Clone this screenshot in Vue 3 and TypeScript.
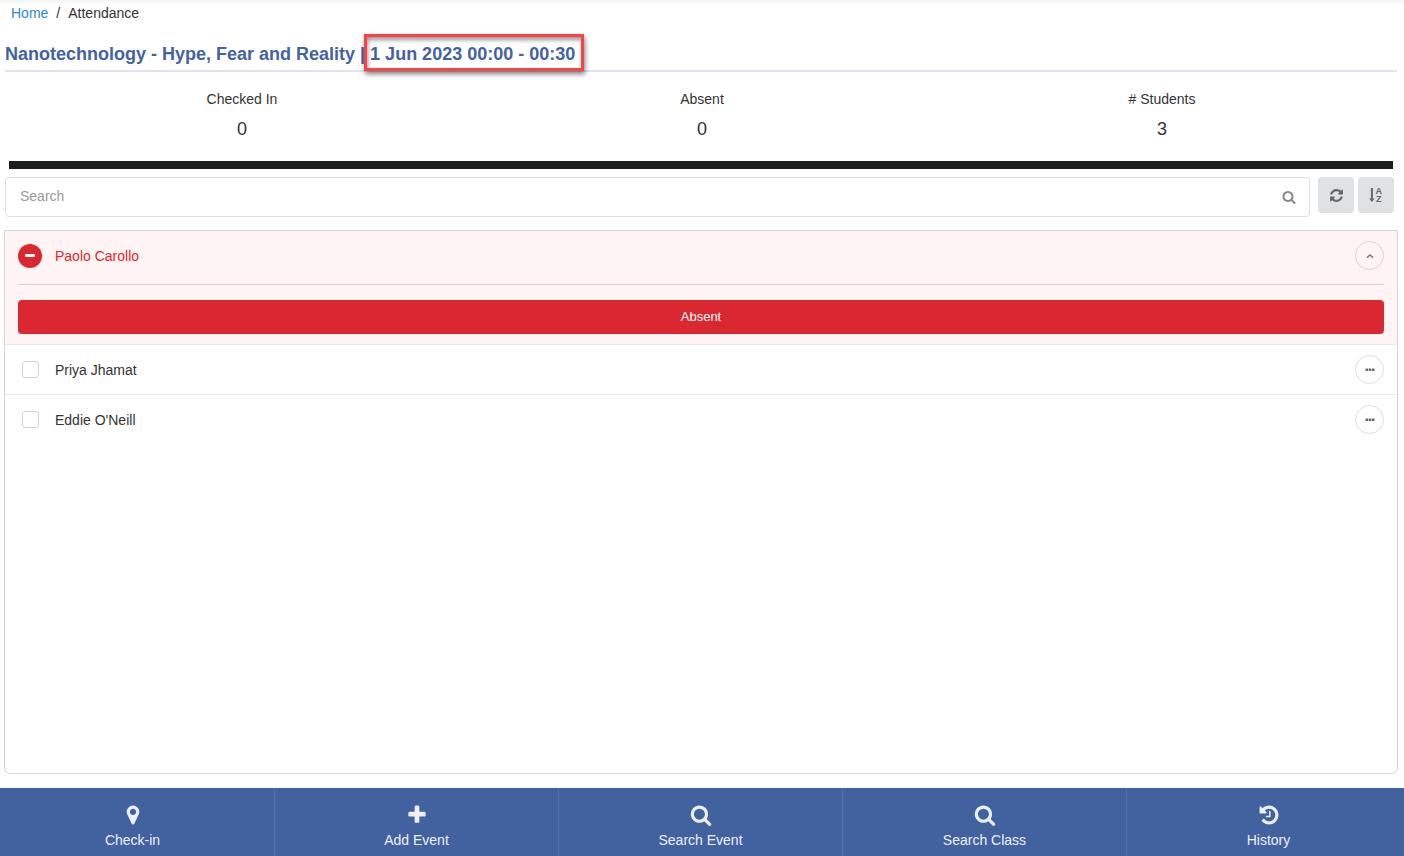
<script setup lang="ts">
import { ref } from 'vue'

interface Stat {
  label: string
  value: number
}

interface Student {
  id: string
  name: string
  present: boolean
}

interface NavItem {
  label: string
  icon: string
}

const searchIcon =
  'M1216 832q0-185-131.5-316.5t-316.5-131.5-316.5 131.5-131.5 316.5 131.5 316.5 316.5 131.5 316.5-131.5 131.5-316.5zm512 832q0 52-38 90t-90 38q-54 0-90-38l-343-342q-179 124-399 124-143 0-273.5-55.5t-225-150-150-225-55.5-273.5 55.5-273.5 150-225 225-150 273.5-55.5 273.5 55.5 225 150 150 225 55.5 273.5q0 220-124 399l343 343q37 37 37 90z'
const plusIcon =
  'M1600 736v192q0 40-28 68t-68 28h-416v416q0 40-28 68t-68 28h-192q-40 0-68-28t-28-68v-416h-416q-40 0-68-28t-28-68v-192q0-40 28-68t68-28h416v-416q0-40 28-68t68-28h192q40 0 68 28t28 68v416h416q40 0 68 28t28 68z'
const markerIcon =
  'M1152 640q0-106-75-181t-181-75-181 75-75 181 75 181 181 75 181-75 75-181zm256 0q0 109-33 179l-364 774q-16 33-47.5 52t-67.5 19-67.5-19-46.5-52l-365-774q-33-70-33-179 0-212 150-362t362-150 362 150 150 362z'
const historyIcon =
  'M1664 896q0 156-61 298t-164 245-245 164-298 61q-172 0-327-72.5t-264-204.5q-7-10-6.5-22.5t8.5-20.5l137-138q10-9 25-9 16 2 23 12 73 95 179 147t225 52q104 0 198.5-40.5t163.5-109.5 109.5-163.5 40.5-198.5-40.5-198.5-109.5-163.5-163.5-109.5-198.5-40.5q-98 0-188 35.5t-160 101.5l137 138q31 30 14 69-17 40-59 40h-448q-26 0-45-19t-19-45v-448q0-42 40-59 39-17 69 14l130 129q107-101 244.5-156.5t284.5-55.5q156 0 298 61t245 164 164 245 61 298zm-640-288v448q0 14-9 23t-23 9h-320q-14 0-23-9t-9-23v-64q0-14 9-23t23-9h224v-352q0-14 9-23t23-9h64q14 0 23 9t9 23z'
const refreshIcon =
  'M1639 1056q0 5-1 7-64 268-268 434.5t-478 166.5q-146 0-282.5-55t-243.5-157l-129 129q-19 19-45 19t-45-19-19-45v-448q0-26 19-45t45-19h448q26 0 45 19t19 45-19 45l-137 137q71 66 161 102t187 36q134 0 250-65t186-179q11-17 53-117 8-23 30-23h192q13 0 22.5 9.5t9.5 22.5zm25-800v448q0 26-19 45t-45 19h-448q-26 0-45-19t-19-45 19-45l138-138q-148-137-349-137-134 0-250 65t-186 179q-11 17-53 117-8 23-30 23h-199q-13 0-22.5-9.5t-9.5-22.5v-7q65-268 270-434.5t480-166.5q146 0 284 55.5t245 156.5l130-129q19-19 45-19t45 19 19 45z'

const query = ref('')

const stats: Stat[] = [
  { label: 'Checked In', value: 0 },
  { label: 'Absent', value: 0 },
  { label: '# Students', value: 3 },
]

const students = ref<Student[]>([
  { id: 'priya', name: 'Priya Jhamat', present: false },
  { id: 'eddie', name: "Eddie O'Neill", present: false },
])

const navItems: NavItem[] = [
  { label: 'Check-in', icon: markerIcon },
  { label: 'Add Event', icon: plusIcon },
  { label: 'Search Event', icon: searchIcon },
  { label: 'Search Class', icon: searchIcon },
  { label: 'History', icon: historyIcon },
]
</script>

<template>
  <div class="page">
    <header class="header">
      <nav class="breadcrumb" aria-label="Breadcrumb">
        <a href="#">Home</a>
        <span>/</span>
        <span>Attendance</span>
      </nav>
      <h1 class="title">
        Nanotechnology - Hype, Fear and Reality |
        <span class="session">1 Jun 2023 00:00 - 00:30</span>
      </h1>
    </header>

    <dl class="stats">
      <div v-for="stat in stats" :key="stat.label" class="stat">
        <dt>{{ stat.label }}</dt>
        <dd>{{ stat.value }}</dd>
      </div>
    </dl>

    <div class="bar"></div>

    <form class="toolbar" @submit.prevent>
      <div class="search">
        <input v-model="query" type="text" placeholder="Search" aria-label="Search" />
        <svg class="search-icon" viewBox="0 0 1792 1792" aria-hidden="true">
          <path :d="searchIcon" />
        </svg>
      </div>
      <button type="button" class="tool" aria-label="Refresh">
        <svg class="refresh-icon" viewBox="0 0 1792 1792" aria-hidden="true">
          <path :d="refreshIcon" />
        </svg>
      </button>
      <button type="button" class="tool" aria-label="Sort by name">
        <svg class="sort-icon" viewBox="0 0 14 16" aria-hidden="true">
          <path d="M1.9 1h2v10.6h1.7L2.9 15 .2 11.600h1.700z" />
          <text x="6.500" y="7">A</text>
          <text x="7" y="15">Z</text>
        </svg>
      </button>
    </form>

    <main class="list">
      <section class="absent-row">
        <div class="row-head">
          <span class="status">
            <svg viewBox="0 0 24 24" aria-hidden="true">
              <circle cx="12" cy="12" r="12" fill="#db2730" />
              <rect x="7" y="10" width="10" height="3" rx="1" fill="#fff" />
            </svg>
          </span>
          <span class="name">Paolo Carollo</span>
          <button type="button" class="round" aria-label="Collapse">
            <svg viewBox="0 0 10 10" aria-hidden="true">
              <path d="M2 6.600 5 4l3 2.600" fill="none" stroke="#777" stroke-width="1.400" />
            </svg>
          </button>
        </div>
        <button type="button" class="absent">Absent</button>
      </section>

      <div v-for="student in students" :key="student.id" class="row">
        <input :id="student.id" v-model="student.present" type="checkbox" />
        <label class="name" :for="student.id">{{ student.name }}</label>
        <button type="button" class="round" :aria-label="`Options for ${student.name}`">
          <svg viewBox="0 0 10 10" fill="#666" aria-hidden="true">
            <rect x="0.500" y="3.500" width="2.600" height="2.400" rx="0.500" />
            <rect x="3.700" y="3.500" width="2.600" height="2.400" rx="0.500" />
            <rect x="6.900" y="3.500" width="2.600" height="2.400" rx="0.500" />
          </svg>
        </button>
      </div>
    </main>

    <nav class="bottom" aria-label="Actions">
      <div class="bottom-items">
        <a v-for="item in navItems" :key="item.label" href="#" class="bottom-item">
          <svg viewBox="0 0 1792 1792" aria-hidden="true">
            <path :d="item.icon" />
          </svg>
          <span>{{ item.label }}</span>
        </a>
      </div>
    </nav>
  </div>
</template>

<style>
body {
  margin: 0;
  background: #fff;
}
</style>

<style scoped>
.page {
  display: flex;
  flex-direction: column;
  min-height: 100vh;
  box-sizing: border-box;
  background: linear-gradient(#f3f3f3, #fff 4px);
  color: #333;
  font: 14px/20px 'Liberation Sans', Arial, sans-serif;
}

.page * {
  box-sizing: border-box;
}

button,
input {
  font: inherit;
}

.header {
  padding: 3px 7px 0 5px;
}

.breadcrumb {
  display: flex;
  gap: 8px;
  padding-left: 6px;
}

.breadcrumb a {
  color: #2f87c8;
  text-decoration: none;
}

.title {
  margin: 19px 0 0;
  padding-bottom: 4px;
  border-bottom: 2px solid #e0e4f0;
  color: #4362a0;
  font-size: 18px;
  line-height: 24px;
}

.session {
  position: relative;
}

.session::after {
  content: '';
  position: absolute;
  inset: -10px -9px -7px -6px;
  border: 3px solid #fb4141;
  box-shadow: 1px 3px 5px rgba(0, 0, 0, 0.5), inset 1px 3px 4px rgba(0, 0, 0, 0.4);
}

.stats {
  display: grid;
  grid-template-columns: repeat(3, 1fr);
  margin: 17px 12px 20px;
  text-align: center;
}

.stat dd {
  margin: 8px 0 0;
  font-size: 18px;
  line-height: 24px;
}

.bar {
  height: 8px;
  margin: 0 11px 0 9px;
  background: #1b1e1f;
}

.toolbar {
  display: flex;
  align-items: flex-start;
  gap: 4px;
  margin: 8px 10px 0 5px;
}

.search {
  display: flex;
  align-items: center;
  flex: 1;
  height: 40px;
  margin-right: 4px;
  padding: 0 13px 0 14px;
  border: 1px solid #dedfe0;
  border-radius: 4px;
  background: #fff;
}

.search input {
  flex: 1;
  min-width: 0;
  padding: 0 0 2px;
  border: 0;
  outline: 0;
  background: transparent;
  color: #333;
}

.search input::placeholder {
  color: #999;
  opacity: 1;
}

.search-icon {
  width: 14px;
  height: 14px;
  fill: #888;
}

.tool {
  display: flex;
  align-items: center;
  justify-content: center;
  width: 36px;
  height: 36px;
  padding: 0;
  border: 0;
  border-radius: 4px;
  background: #e0e1e2;
}

.refresh-icon {
  width: 15px;
  height: 15px;
  fill: #666;
}

.sort-icon {
  width: 14px;
  height: 16px;
  overflow: visible;
  fill: #666;
  font: bold 9px 'Liberation Sans', Arial, sans-serif;
}

.list {
  flex: 1;
  margin: 13px 6px 14px 4px;
  border: 1px solid #d4d4d5;
  border-radius: 0 0 6px 6px;
}

.absent-row {
  padding: 0 13px 10px;
  border-bottom: 1px solid #e8e8e8;
  background: #fef4f3;
}

.row-head {
  display: flex;
  align-items: center;
  height: 54px;
  padding-bottom: 4px;
  border-bottom: 1px solid #dcd0d1;
}

.status {
  width: 24px;
  height: 24px;
  margin-right: 13px;
}

.status svg {
  display: block;
}

.name {
  flex: 1;
}

.row-head .name {
  color: #db2730;
}

.round {
  display: flex;
  align-items: center;
  justify-content: center;
  width: 29px;
  height: 29px;
  padding: 0;
  border: 1px solid #dedede;
  border-radius: 50%;
  background: transparent;
}

.round svg {
  width: 10px;
  height: 10px;
}

.row-head .round {
  border-color: #ddd0d3;
}

.absent {
  display: block;
  width: 100%;
  height: 34px;
  margin-top: 15px;
  padding: 0 0 1px;
  border: 0;
  border-radius: 4px;
  background: #db2730;
  color: #fff;
  font-size: 13px;
}

.row {
  display: flex;
  align-items: center;
  height: 49px;
  padding: 0 13px 0 17px;
}

.row + .row {
  height: 50px;
  border-top: 1px solid #e8e8e8;
}

.row input {
  width: 17px;
  height: 17px;
  margin: 0 16px 0 0;
  appearance: none;
  border: 1px solid #d4d4d5;
  border-radius: 3px;
  background: #fff;
}

.row input:checked {
  background: #4362a0;
}

.bottom {
  overflow: hidden;
  background: #42629f;
}

.bottom-items {
  display: grid;
  grid-template-columns: repeat(5, 1fr);
  margin: 0 -7px 0 -9px;
}

.bottom-item {
  display: flex;
  flex-direction: column;
  align-items: center;
  gap: 4px;
  height: 68px;
  padding-top: 16px;
  border-right: 1px solid #5471a9;
  color: #eceff6;
  text-decoration: none;
}

.bottom-item svg {
  width: 22px;
  height: 22px;
  fill: #eceff6;
}
</style>
